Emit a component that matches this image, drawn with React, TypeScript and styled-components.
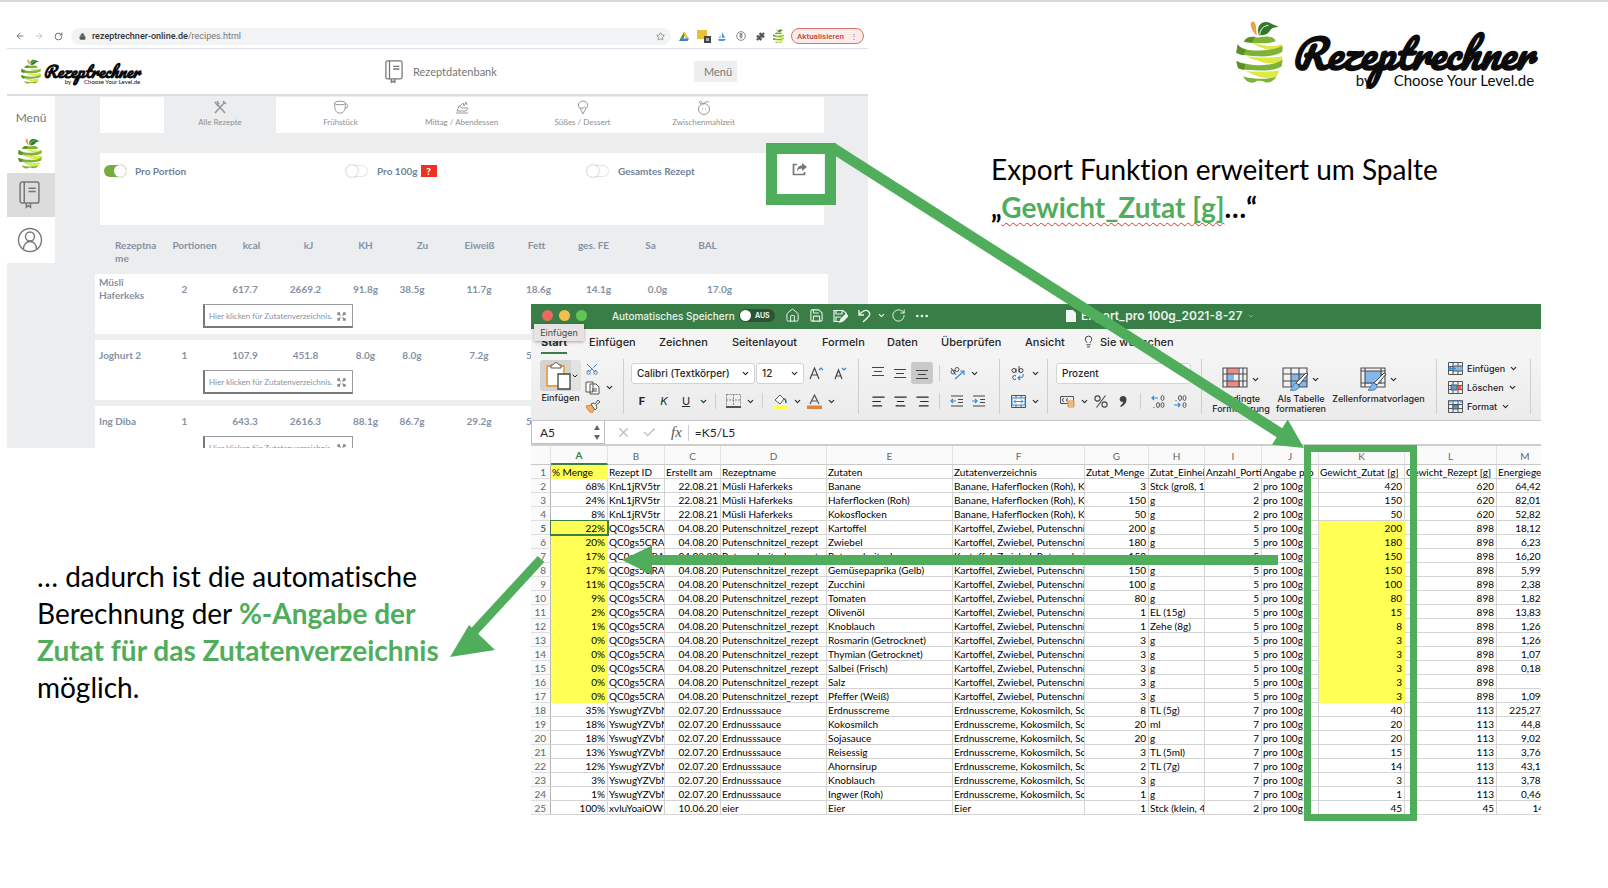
import React from 'react';
import styled, { createGlobalStyle, css } from 'styled-components';
import {
  AlignCenter,
  AlignLeft,
  AlignRight,
  ArrowLeft,
  ArrowRight,
  Check,
  ChevronDown,
  Home,
  Lightbulb,
  Lock,
  MoreHorizontal,
  Puzzle,
  RotateCw,
  Save,
  Scissors,
  Star,
  X,
} from 'lucide-react';

const GREEN = '#50ad5b';
const EXCEL = '#397d47';
const SHEET_FONT = 'Lato, "Noto Sans", sans-serif';
const UI_FONT = 'Inter, "Liberation Sans", sans-serif';

const GlobalStyle = createGlobalStyle`
  *, *::before, *::after { box-sizing: border-box; }
  body { margin: 0; background: #fff; font-family: ${SHEET_FONT}; }
  button, input, select { font: inherit; color: inherit; margin: 0; }
  button { border: 0; padding: 0; background: none; }
  p, h1 { margin: 0; }
`;

const Slide = styled.main`
  position: relative;
  min-height: 100vh;
  border-top: 2px solid #d9d9d9;
  overflow: hidden;
`;

/* ---------- objects placed on the slide ---------- */

const Placed = styled.div<{ $x: number; $y: number; $w?: number; $h?: number }>`
  position: absolute;
  left: ${p => p.$x}px;
  top: ${p => p.$y - 2}px;
  ${p => p.$w && `width: ${p.$w}px;`}
  ${p => p.$h && `height: ${p.$h}px;`}
`;

const Frame = styled(Placed)<{ $b: number }>`
  border: ${p => p.$b}px solid ${GREEN};
`;

const Note = styled.p<{ $lh: number }>`
  font-size: 28px;
  line-height: ${p => p.$lh}px;
  font-variant-ligatures: none;
  color: #000;
  white-space: nowrap;
  strong { color: ${GREEN}; }
  b { font-weight: 700; }
`;

const Misspelled = styled.strong`
  text-decoration: underline wavy #e0352b 1px;
  text-underline-offset: 4px;
  text-decoration-skip-ink: none;
`;

const Arrows = styled.svg`
  position: absolute;
  left: 0;
  top: -2px;
  pointer-events: none;
`;

/* ---------- logo ---------- */

const LogoBox = styled.div<{ $gap: number }>`
  display: flex;
  align-items: flex-start;
  gap: ${p => p.$gap}px;
`;
const Wordmark = styled.div<{ $size: number; $drop: number }>`
  font: italic 900 ${p => p.$size}px/1 Pacifico, Lato, sans-serif;
  padding-top: ${p => p.$drop}px;
  color: #0b0b0b;
  white-space: nowrap;
`;
const Byline = styled.div<{ $size: number }>`
  display: flex;
  justify-content: flex-end;
  gap: ${p => p.$size + 7}px;
  font: 400 ${p => p.$size}px/1 Lato, sans-serif;
`;

function Apple({ w, h }: { w: number; h: number }) {
  return (
    <svg width={w} height={h} viewBox="108 60 142 194" preserveAspectRatio="none" aria-hidden="true">
      <path d="M153 68C158 60 168 66 168 78L171 107C160 98 151 82 153 68Z" fill="#eda04a" />
      <path d="M177 106C168 80 185 62 205 67C215 70 225 77 236 80C225 84 217 82 211 92C204 104 192 108 177 106Z" fill="#327a2b" />
      <path d="M180 104C180 90 190 78 206 76" fill="none" stroke="#fff" strokeWidth="3" />
      <path d="M132 126C140 110 160 110 175 113C200 108 222 108 228 124C215 133 150 132 132 126Z" fill="#7db338" />
      <path d="M132 126C138 112 150 110 166 111L156 129Z" fill="#5c8f26" />
      <path d="M156 130C190 138 230 144 246 132L246 142C236 154 215 153 200 149C180 144 168 138 156 130Z" fill="#dfe845" />
      <path d="M113 134C125 150 160 155 190 152C215 150 235 146 249 138L248 156C230 168 200 172 170 170C140 168 115 166 109 158Z" fill="#7db338" />
      <path d="M113 134C118 142 125 147 138 150L130 166C118 164 111 162 109 158Z" fill="#5c8f26" />
      <path d="M140 170C165 174 215 176 248 170L247 184C235 194 205 193 188 188C168 182 152 178 140 170Z" fill="#dfe845" />
      <path d="M109 184C130 194 170 199 200 196C225 193 240 188 249 180L246 200C235 210 200 214 175 213C150 212 120 212 114 205Z" fill="#7db338" />
      <path d="M109 184C118 189 126 192 136 193L132 211C122 210 117 208 114 205Z" fill="#5c8f26" />
      <path d="M138 214C160 218 215 217 240 213L230 231C210 238 188 236 172 230C158 225 148 221 138 214Z" fill="#dfe845" />
      <path d="M129 230C150 240 200 242 230 231C222 245 208 252 196 249C185 243 172 243 165 249C152 254 136 246 129 230Z" fill="#7db338" />
    </svg>
  );
}

/* ---------- browser window ---------- */

const Browser = styled.section`
  display: flex;
  flex-direction: column;
  height: 424px;
  overflow: hidden;
  background: #ebedef;
  color: #8592a4;
`;
const Toolbar = styled.div`
  display: flex;
  align-items: center;
  height: 25px;
  flex: none;
  background: #fff;
  border-bottom: 1px solid #dbe1ea;
  padding: 0 4px 0 7px;
  gap: 7px;
  color: #666;
`;
const BarIcon = styled.button`
  display: grid;
  place-items: center;
  width: 12px;
`;
const Address = styled.label`
  flex: 1;
  display: flex;
  align-items: center;
  gap: 6px;
  height: 17px;
  padding: 0 6px 0 8px;
  border-radius: 9px;
  background: #f1f3f4;
  font: 9px Roboto, sans-serif;
  color: #777;
  b { font-weight: 500; color: #333; }
  span { flex: 1; }
`;
const Update = styled.button`
  display: flex;
  align-items: center;
  justify-content: center;
  gap: 6px;
  width: 73px;
  height: 16px;
  border: 1px solid #d97069;
  border-radius: 8px;
  background: #fbeceb;
  color: #c5443c;
  font: 500 8px Roboto, sans-serif;
`;
const SiteHeader = styled.header`
  display: grid;
  grid-template-columns: 364px 309px 43px;
  align-items: center;
  height: 47px;
  flex: none;
  padding-left: 14px;
  background: #fff;
  border-bottom: 2px solid #dcdddf;
  color: #777;
  font-size: 11px;
`;
const SiteTitle = styled.div`
  display: flex;
  align-items: center;
  gap: 10px;
`;
const MenuButton = styled.button`
  height: 21px;
  padding-left: 5px;
  background: #eee;
`;
const SiteBody = styled.div`
  display: flex;
  align-items: flex-start;
`;
const Side = styled.nav`
  display: grid;
  grid-template-rows: 42px 35px 44px 46px;
  place-items: center;
  width: 48px;
  flex: none;
  background: #fff;
  color: #777;
  font-size: 12px;
`;
const SideItem = styled.a<{ $active?: boolean }>`
  display: grid;
  place-items: center;
  width: 100%;
  height: 100%;
  padding-right: 3px;
  background: ${p => (p.$active ? '#dcdcdc' : 'transparent')};
  color: #777;
`;
const SideLogo = styled.a`
  align-self: start;
  padding-right: 3px;
  line-height: 0;
`;
const Content = styled.div`
  padding: 1px 0 0 40px;
`;
const Tabs = styled.nav`
  display: grid;
  grid-template-columns: 56px 112px repeat(4, 113px);
  gap: 8px;
  width: 724px;
  height: 36px;
  margin-left: 5px;
  background: #fff;
`;
const Tab = styled.a<{ $active?: boolean }>`
  display: flex;
  flex-direction: column;
  align-items: center;
  gap: 2px;
  padding-top: 3px;
  background: ${p => (p.$active ? '#ebedef' : 'transparent')};
  color: #8f8f8f;
  font-size: 8px;
  line-height: 10px;
  text-decoration: none;
`;
const Options = styled.div`
  display: grid;
  grid-template-columns: 242px 241px 204px 16px;
  align-items: center;
  align-content: start;
  width: 724px;
  height: 72px;
  margin: 20px 0 0 5px;
  padding: 10px 0 0 4px;
  background: #fff;
  font-size: 10px;
  font-weight: 700;
  color: #73819a;
`;
const Option = styled.label`
  display: flex;
  align-items: center;
  gap: 9px;
`;
const Toggle = styled.input`
  appearance: none;
  display: flex;
  width: 22px;
  height: 12px;
  border-radius: 6px;
  background: #fff;
  box-shadow: inset 0 0 0 1px #e6e6e6;
  &::before {
    content: '';
    width: 12px;
    height: 12px;
    border-radius: 6px;
    background: #fff;
    box-shadow: 0 0 2px #999;
  }
  &:checked {
    justify-content: flex-end;
    background: #76ac3c;
    box-shadow: none;
  }
`;
const Help = styled.span`
  width: 16px;
  height: 12px;
  margin-left: -6px;
  background: #ee3124;
  color: #fff;
  font-weight: 900;
  line-height: 12px;
  text-align: center;
`;
const RecipeTable = styled.table`
  display: block;
  width: 733px;
  font-size: 10px;
  font-weight: 700;
  thead, tbody { display: block; }
  th, td { padding: 0; text-align: center; font-weight: 700; }
`;
const HeadRow = styled.tr`
  display: grid;
  grid-template-columns: 71px repeat(10, 57px);
  height: 49px;
  padding-top: 14px;
  line-height: 13px;
  th:first-child {
    width: 45px;
    margin-left: 20px;
    text-align: left;
    word-break: break-all;
  }
`;
const RecipeRow = styled.tr`
  display: grid;
  grid-template-columns: 59px 61px 60px 61px 59px 34px 80px 59px 61px 57px 67px;
  grid-template-rows: 30px 30px;
  align-items: center;
  height: 60px;
  margin-bottom: 6px;
  background: #fff;
  line-height: 13px;
  td:first-child { text-align: left; padding-left: 4px; }
  td:nth-child(7) { padding-left: 20px; }
`;
const ListCell = styled.td`
  grid-column: 1 / -1;
  align-self: start;
  justify-self: start;
  && { padding: 0 0 0 108px; }
`;
const ListButton = styled.button`
  display: flex;
  align-items: center;
  gap: 4px;
  width: 150px;
  height: 24px;
  padding: 1px 0 0 4px;
  border: 1px solid #9a9ca0;
  border-left: 2px solid #77797c;
  border-bottom: 2px solid #77797c;
  font-size: 8px;
  font-weight: 400;
  white-space: nowrap;
`;

const RECIPES = [
  ['Müsli Haferkeks', '2', '617.7', '2669.2', '91.8g', '38.5g', '11.7g', '18.6g', '14.1g', '0.0g', '17.0g'],
  ['Joghurt 2', '1', '107.9', '451.8', '8.0g', '8.0g', '7.2g', '51.1g'],
  ['Ing Diba', '1', '643.3', '2616.3', '88.1g', '86.7g', '29.2g', '51.6g'],
];

const BookIcon = ({ s }: { s: number }) => (
  <svg width={s} height={s * 1.3} viewBox="0 0 20 26" fill="none" stroke="currentColor" strokeWidth="1.4">
    <rect x="1" y="1" width="18" height="20" rx="2" />
    <path d="M5 1v20M9 7h7M9 10h7M7 21v4l2-1.5 2 1.5v-4" />
  </svg>
);
const TabIcons = [
  <svg key="a" width="14" height="15" viewBox="0 0 14 15" fill="none" stroke="#999" strokeWidth="1.6"><path d="M2 13L11 3M12 13L4 4M2 2l3 4M4 1l2 3M10 1l3 3" /></svg>,
  <svg key="b" width="16" height="15" viewBox="0 0 16 15" fill="none" stroke="#999"><ellipse cx="7" cy="3" rx="5.5" ry="1.8" /><path d="M1.5 3c0 5 1 9 3.5 10h4c2.5-1 3.5-5 3.5-10M12.5 4c3-.5 3 4-.5 4.5" /></svg>,
  <svg key="c" width="14" height="15" viewBox="0 0 14 15" fill="none" stroke="#999"><path d="M1 13h12M2 11h9l2-3H7L4 6 2 11M5 6l3-3 1 3 2-4 1 3" /></svg>,
  <svg key="d" width="12" height="15" viewBox="0 0 12 15" fill="none" stroke="#999"><path d="M3 8L6 14 9 8M2 7.5C0 4 3 1 6 1s6 3 4 6.5c-1 1-2 0-2.5-.5C6 8.5 4 8.5 2 7.5" /></svg>,
  <svg key="e" width="14" height="15" viewBox="0 0 14 15" fill="none" stroke="#999"><circle cx="7" cy="9" r="5.5" /><path d="M7 4C5 1 3 1 2 2c1 2 3 2 5 2 0-2 3-3 5-2M5 9h1M8 9h1" /></svg>,
];
const TAB_NAMES = ['Alle Rezepte', 'Frühstück', 'Mittag / Abendessen', 'Süßes / Dessert', 'Zwischenmahlzeit'];

function BrowserWindow() {
  return (
    <Browser>
      <Toolbar>
        <BarIcon aria-label="Zurück"><ArrowLeft size={10} /></BarIcon>
        <BarIcon aria-label="Vor"><ArrowRight size={10} color="#bbb" /></BarIcon>
        <BarIcon aria-label="Neu laden"><RotateCw size={9} strokeWidth={2.5} /></BarIcon>
        <Address>
          <Lock size={7} fill="#555" strokeWidth={3} />
          <span><b>rezeptrechner-online.de</b>/recipes.html</span>
          <Star size={9} />
        </Address>
        <BarIcon aria-label="Drive"><svg width="10" height="9" viewBox="0 0 10 9"><path d="M5 0L0 9h3l3-6z" fill="#2a9d4f" /><path d="M4 0h2l4 7H7z" fill="#f6c231" /><path d="M2 9l1-2.5h7L8.5 9z" fill="#3b7ded" /></svg></BarIcon>
        <BarIcon aria-label="Notiz"><svg width="14" height="14" viewBox="0 0 14 14"><path d="M0 1h10v9H0z" fill="#ecc038" /><path d="M7 7h7v7H7z" fill="#444" /><path d="M9 9h3v3H9z" fill="#aaa" /></svg></BarIcon>
        <BarIcon aria-label="Segel"><svg width="8" height="9" viewBox="0 0 8 9"><path d="M2.5 6V3L1 6zM4 6V0l3 5.5z" fill="#4a9bd6" /><path d="M0 7h8L6 9H1z" fill="#4a9bd6" /></svg></BarIcon>
        <BarIcon aria-label="Info"><svg width="10" height="10" viewBox="0 0 10 10"><circle cx="5" cy="5" r="4.3" fill="none" stroke="#888" /><path d="M3.5 2h3v4l-1.5 2-1.5-2z" fill="#999" /></svg></BarIcon>
        <BarIcon aria-label="Erweiterungen"><Puzzle size={9} fill="#555" /></BarIcon>
        <Apple w={11} h={14} />
        <Update>Aktualisieren <span>⋮</span></Update>
      </Toolbar>
      <SiteHeader>
        <LogoBox $gap={2}>
          <Apple w={20} h={25} />
          <Wordmark $size={16} $drop={4}>
            Rezeptrechner
            <Byline $size={6}><span>by</span><span>Choose Your Level.de</span></Byline>
          </Wordmark>
        </LogoBox>
        <SiteTitle><BookIcon s={18} />Rezeptdatenbank</SiteTitle>
        <MenuButton>Menü</MenuButton>
      </SiteHeader>
      <SiteBody>
        <Side>
          <span>Menü</span>
          <SideLogo href="#start" aria-label="Start"><Apple w={24} h={31} /></SideLogo>
          <SideItem href="#rezepte" $active aria-label="Rezepte"><BookIcon s={21} /></SideItem>
          <SideItem href="#konto" aria-label="Konto">
            <svg width="26" height="26" viewBox="0 0 26 26" fill="none" stroke="currentColor" strokeWidth="1.4"><circle cx="13" cy="13" r="11.5" /><circle cx="13" cy="9.5" r="4.5" /><path d="M6.5 22c0-10 13-10 13 0" /></svg>
          </SideItem>
        </Side>
        <Content>
          <Tabs>
            <span />
            {TAB_NAMES.map((t, i) => (
              <Tab key={t} href="#tab" $active={i === 0}>{TabIcons[i]}{t}</Tab>
            ))}
          </Tabs>
          <Options>
            <Option><Toggle type="checkbox" defaultChecked />Pro Portion</Option>
            <Option><Toggle type="checkbox" />Pro 100g<Help>?</Help></Option>
            <Option><Toggle type="checkbox" />Gesamtes Rezept</Option>
            <button aria-label="Exportieren">
              <svg width="15" height="13" viewBox="0 0 15 13"><path d="M5 1.5H1.5v10h11V9" fill="none" stroke="#777" strokeWidth="1.7" /><path d="M10 0l5 4-5 4V5.5C7 5.5 6 6.5 5 8.5 5 4.5 7 2.5 10 2.5z" fill="#777" /></svg>
            </button>
          </Options>
          <RecipeTable>
            <thead>
              <HeadRow>
                {['Rezeptname', 'Portionen', 'kcal', 'kJ', 'KH', 'Zu', 'Eiweiß', 'Fett', 'ges. FE', 'Sa', 'BAL'].map(h => <th key={h}>{h}</th>)}
              </HeadRow>
            </thead>
            <tbody>
              {RECIPES.map(r => (
                <RecipeRow key={r[0]}>
                  {r.map((c, i) => <td key={i}>{c}</td>)}
                  <ListCell>
                    <ListButton>
                      Hier klicken für Zutatenverzeichnis.
                      <svg width="9" height="9" viewBox="0 0 9 9" fill="none" stroke="#888" strokeWidth="1.3"><path d="M1 3V1h2M6 1h2v2M8 6v2H6M3 8H1V6M1 1l2.5 2.5M8 1L5.5 3.5M1 8l2.5-2.5M8 8L5.5 5.5" /></svg>
                    </ListButton>
                  </ListCell>
                </RecipeRow>
              ))}
            </tbody>
          </RecipeTable>
        </Content>
      </SiteBody>
    </Browser>
  );
}

/* ---------- spreadsheet window ---------- */

const Excel = styled.section`
  position: relative;
  height: 513px;
  overflow: hidden;
  background: #fff;
  font: 11px ${UI_FONT};
  color: #262626;
`;
const TitleBar = styled.div`
  display: flex;
  align-items: center;
  height: 25px;
  padding: 0 0 2px 11px;
  background: ${EXCEL};
  color: #e9f3eb;
`;
const Light = styled.span<{ $c: string }>`
  width: 11px;
  height: 11px;
  margin-right: 6px;
  border-radius: 50%;
  background: ${p => p.$c};
`;
const AutoSave = styled.label`
  display: flex;
  align-items: center;
  justify-content: space-between;
  width: 163px;
  margin: 0 5px 0 19px;
  font-size: 10px;
  font-weight: 500;
  white-space: nowrap;
`;
const Switch = styled.button`
  display: flex;
  align-items: center;
  gap: 4px;
  width: 36px;
  height: 13px;
  flex: none;
  border-radius: 7px;
  background: #2a5434;
  color: #fff;
  font-size: 7px;
  font-weight: 600;
  &::before {
    content: '';
    width: 11px;
    height: 11px;
    margin-left: 1px;
    border-radius: 50%;
    background: #fff;
  }
`;
const Tool = styled.button<{ $w?: number; $on?: boolean }>`
  display: grid;
  place-items: center;
  width: ${p => p.$w ?? 22}px;
  height: 22px;
  flex: none;
  border-radius: 3px;
  ${p => p.$on && css`background: #c9c9c9;`}
`;
const DocTitle = styled.h1`
  display: flex;
  align-items: center;
  gap: 5px;
  margin-left: 132px;
  font-size: 12px;
  font-weight: 600;
  white-space: nowrap;
`;
const RibbonTabs = styled.nav`
  display: grid;
  grid-template-columns: 48px 70px 73px 90px 65px 54px 84px 57px 18px auto;
  align-items: center;
  height: 28px;
  padding: 0 0 3px 10px;
  background: #f4f4f4;
`;
const RibbonTab = styled.a<{ $active?: boolean }>`
  justify-self: start;
  height: 25px;
  line-height: 26px;
  font-size: 11px;
  font-weight: ${p => (p.$active ? 700 : 500)};
  color: inherit;
  text-decoration: none;
  white-space: nowrap;
  border-bottom: 2px solid ${p => (p.$active ? EXCEL : 'transparent')};
`;
const Tooltip = styled.div`
  position: absolute;
  left: 3px;
  top: 20px;
  width: 50px;
  height: 17px;
  background: #e6e3e2;
  box-shadow: 0 1px 3px #0005;
  color: #4c4c4c;
  font-size: 9px;
  line-height: 17px;
  text-align: center;
`;
const Ribbon = styled.div`
  display: flex;
  height: 64px;
  padding: 2px 0 6px;
  background: linear-gradient(#f4f4f4, #ebebeb);
  border-bottom: 1px solid #c6c6c6;
`;
const Group = styled.div<{ $w: number; $pad?: number }>`
  display: flex;
  flex-direction: column;
  flex: none;
  gap: 6px;
  width: ${p => p.$w}px;
  padding: 3px 0 0 ${p => p.$pad ?? 7}px;
  border-right: 1px solid #cfcfcf;
`;
const Line = styled.div`
  display: flex;
  align-items: center;
  height: 22px;
`;
const Sep = styled.span`
  width: 1px;
  height: 16px;
  margin: 0 6px;
  background: #cfcfcf;
`;
const SelectBox = styled.span<{ $w: number }>`
  display: flex;
  align-items: center;
  width: ${p => p.$w}px;
  height: 21px;
  flex: none;
  padding-right: 4px;
  border: 1px solid #d3d3d3;
  border-radius: 3px;
  background: #fff;
  & + & { margin-left: 1px; }
  select {
    appearance: none;
    flex: 1;
    min-width: 0;
    border: 0;
    padding: 0 0 0 5px;
    background: none;
    font-weight: 500;
    font-size: 10px;
  }
`;
const PasteGroup = styled.div`
  display: flex;
  width: 93px;
  flex: none;
  padding-left: 9px;
  border-right: 1px solid #cfcfcf;
`;
const Column = styled.div<{ $tight?: boolean }>`
  display: flex;
  flex-direction: column;
  ${p => p.$tight && css`${Line} { height: 19px; }`}
`;
const PasteButton = styled.button`
  display: flex;
  align-items: center;
  width: 41px;
  height: 31px;
  margin: 1px 0 2px;
  background: linear-gradient(90deg, #d3d3d3 31px, #e2e2e2 31px);
  border-radius: 3px;
`;
const Caption = styled.span`
  font-size: 9px;
  font-weight: 500;
  line-height: 10px;
  text-align: center;
  white-space: nowrap;
`;
const BigTools = styled.div`
  display: flex;
  width: 235px;
  flex: none;
  padding-left: 7px;
  border-right: 1px solid #cfcfcf;
`;
const BigTool = styled.button<{ $w: number }>`
  display: flex;
  flex-direction: column;
  align-items: center;
  width: ${p => p.$w}px;
  padding-top: 5px;
`;
const BigIcon = styled.span`
  display: flex;
  align-items: center;
  gap: 2px;
  height: 30px;
`;
const CellTools = styled.div`
  display: grid;
  grid-template-rows: repeat(3, 19px);
  align-items: center;
  width: 94px;
  flex: none;
  padding: 0 0 0 11px;
  border-right: 1px solid #cfcfcf;
`;
const CellTool = styled.button`
  display: flex;
  align-items: center;
  gap: 4px;
  font-size: 9px;
  font-weight: 500;
`;
const FormulaBar = styled.div`
  display: flex;
  align-items: center;
  height: 25px;
  border-bottom: 2px solid #cdcdcd;
  font: 12px ${SHEET_FONT};
`;
const NameBox = styled.label`
  display: flex;
  align-items: center;
  width: 74px;
  height: 23px;
  margin-right: 5px;
  padding: 0 4px 0 8px;
  border: 1px solid #c0c0c0;
  border-top: 0;
  input { flex: 1; min-width: 0; border: 0; padding: 0; }
`;
const Formula = styled.input`
  flex: 1;
  height: 16px;
  margin-left: 6px;
  padding: 0 0 0 6px;
  border: 0;
  border-left: 1px solid #d0d0d0;
`;
const Fx = styled.span`
  margin-left: 9px;
  font: italic 15px "Liberation Serif", serif;
  color: #555;
`;
const Sheet = styled.table`
  width: 1023px;
  table-layout: fixed;
  border-collapse: separate;
  border-spacing: 0;
  font: 10px/12px ${SHEET_FONT};
  color: #000;
`;
const ColHead = styled.th<{ $on?: boolean }>`
  height: 19px;
  padding: 1px 0 0;
  background: #fafafa;
  border-right: 1px solid #e2e2e2;
  border-bottom: ${p => (p.$on ? `2px solid ${EXCEL}` : '1px solid #c8c8c8')};
  color: ${p => (p.$on ? EXCEL : '#666')};
  font-weight: ${p => (p.$on ? 700 : 400)};
`;
const RowHead = styled.th<{ $on?: boolean }>`
  height: 14px;
  padding: 1px 4px 0 0;
  background: #fafafa;
  border-right: 1px solid #b5b5b5;
  border-bottom: 1px solid #dedede;
  color: ${p => (p.$on ? EXCEL : '#666')};
  font-weight: ${p => (p.$on ? 700 : 400)};
  text-align: right;
`;
const Cell = styled.td<{ $num?: boolean; $hot?: boolean; $active?: boolean }>`
  height: 14px;
  padding: 1px 2px 0 1px;
  overflow: hidden;
  white-space: nowrap;
  text-align: ${p => (p.$num ? 'right' : 'left')};
  background: ${p => (p.$hot ? '#ffff54' : '#fff')};
  border-right: 1px solid ${p => (p.$hot ? '#ffff54' : '#d4d4d4')};
  border-bottom: 1px solid ${p => (p.$hot ? '#ffff54' : '#d4d4d4')};
  ${p => p.$active && css`
    position: relative;
    border-color: ${EXCEL};
    box-shadow: 0 0 0 1px ${EXCEL};
  `}
`;
/* Energy values are wider than the visible part of their column. */
const Wide = styled.span`
  display: block;
  width: 60px;
  text-align: right;
`;

const COLS = [57, 57, 56, 106, 126, 132, 64, 56, 57, 57, 86, 92, 57];
const LETTERS = 'ABCDEFGHIJKLM'.split('');
const NUMERIC = [0, 2, 6, 8, 10, 11, 12];
const HEAD = ['% Menge', 'Rezept ID', 'Erstellt am', 'Rezeptname', 'Zutaten', 'Zutatenverzeichnis', 'Zutat_Menge', 'Zutat_Einheit', 'Anzahl_Portionen', 'Angabe pro', 'Gewicht_Zutat [g]', 'Gewicht_Rezept [g]', 'Energiegehalt'];

const batch = (id: string, date: string, name: string, list: string, portions: string, total: string, rows: string[][]) =>
  rows.map(([pct, item, qty, unit, weight, energy]) => [pct, id, date, name, item, list, qty, unit, portions, 'pro 100g', weight, total, energy]);

const DATA: string[][] = [
  HEAD,
  ...batch('KnL1jRV5tr', '22.08.21', 'Müsli Haferkeks', 'Banane, Haferflocken (Roh), Kokosflocken', '2', '620', [
    ['68%', 'Banane', '3', 'Stck (groß, 140g)', '420', '64,42258'],
    ['24%', 'Haferflocken (Roh)', '150', 'g', '150', '82,01612'],
    ['8%', 'Kokosflocken', '50', 'g', '50', '52,82258'],
  ]),
  ...batch('QC0gs5CRA7', '04.08.20', 'Putenschnitzel_rezept', 'Kartoffel, Zwiebel, Putenschnitzel', '5', '898', [
    ['22%', 'Kartoffel', '200', 'g', '200', '18,12917'],
    ['20%', 'Zwiebel', '180', 'g', '180', '6,23719'],
    ['17%', 'Putenschnitzel', '150', 'g', '150', '16,20267'],
    ['17%', 'Gemüsepaprika (Gelb)', '150', 'g', '150', '5,99220'],
    ['11%', 'Zucchini', '100', 'g', '100', '2,38307'],
    ['9%', 'Tomaten', '80', 'g', '80', '1,82628'],
    ['2%', 'Olivenöl', '1', 'EL (15g)', '15', '13,83073'],
    ['1%', 'Knoblauch', '1', 'Zehe (8g)', '8', '1,26948'],
    ['0%', 'Rosmarin (Getrocknet)', '3', 'g', '3', '1,26057'],
    ['0%', 'Thymian (Getrocknet)', '3', 'g', '3', '1,07349'],
    ['0%', 'Salbei (Frisch)', '3', 'g', '3', '0,18040'],
    ['0%', 'Salz', '3', 'g', '3', ''],
    ['0%', 'Pfeffer (Weiß)', '3', 'g', '3', '1,09020'],
  ]),
  ...batch('YswugYZVbNq', '02.07.20', 'Erdnusssauce', 'Erdnusscreme, Kokosmilch, Sojasauce', '7', '113', [
    ['35%', 'Erdnusscreme', '8', 'TL (5g)', '40', '225,27433'],
    ['18%', 'Kokosmilch', '20', 'ml', '20', '44,8849'],
    ['18%', 'Sojasauce', '20', 'g', '20', '9,02654'],
    ['13%', 'Reisessig', '3', 'TL (5ml)', '15', '3,76991'],
    ['12%', 'Ahornsirup', '2', 'TL (7g)', '14', '43,1150'],
    ['3%', 'Knoblauch', '3', 'g', '3', '3,78230'],
    ['1%', 'Ingwer (Roh)', '1', 'g', '1', '0,46017'],
  ]),
  ['100%', 'xvluYoaiOW', '10.06.20', 'eier', 'Eier', 'Eier', '1', 'Stck (klein, 45g)', '2', 'pro 100g', '45', '45', '14,22'],
];

const Chev = ({ w = 12 }: { w?: number }) => (
  <Tool $w={w} aria-label="Mehr"><ChevronDown size={9} strokeWidth={3} /></Tool>
);
const Rows = ({ a }: { a: string }) => (
  <svg width="14" height="14" viewBox="0 0 14 14" stroke="#444" strokeWidth="1.2"><path d={a} /></svg>
);
const GridPic = ({ kind }: { kind: 'cond' | 'table' | 'style' }) => (
  <svg width="27" height="25" viewBox="0 0 27 25">
    {kind === 'cond' && <><path d="M5 1h11v6H5zM5 14h13v6H5z" fill="#ee8a85" /><path d="M5 7h7v7H5z" fill="#84b7ea" /></>}
    {kind === 'table' && <path d="M9 7h16v13H9z" fill="#84b7ea" />}
    {kind === 'style' && <path d="M5 4h17v13H5z" fill="#84b7ea" />}
    <path
      d={kind === 'style' ? 'M1 1h24v19H1zM5 1v19M1 4h24M1 16h24M21 1v8' : kind === 'cond' ? 'M1 1h24v19H1zM1 7h24M1 14h24M5 1v19M17 1v19M21 1v19' : 'M1 1h24v19H1zM1 7h24M1 14h24M9 1v19M17 1v19'}
      fill="none" stroke="#4a4a4a" strokeWidth="1.1"
    />
    {kind !== 'cond' && <><path d="M26 7l-9 11-3-2L24 6z" fill="#f6f6f6" stroke="#444" /><path d="M14 16l3 3c0 4-5 5-9 4 3-1 2-6 6-7z" fill="#84b7ea" stroke="#3a7cc0" /></>}
  </svg>
);
const MiniGrid = ({ mark }: { mark: React.ReactNode }) => (
  <svg width="15" height="13" viewBox="0 0 15 13" fill="none" stroke="#555"><path d="M.5 .5h14v12H.5zM.5 4.5h14M.5 8.5h14M5 0v12M10 0v12" />{mark}</svg>
);

function ExcelWindow() {
  return (
    <Excel>
      <TitleBar>
        <Light $c="#ec6a5e" /><Light $c="#f4bf4f" /><Light $c="#61c554" />
        <AutoSave>Automatisches Speichern<Switch>AUS</Switch></AutoSave>
        <Tool $w={24} aria-label="Start"><Home size={15} strokeWidth={1.6} /></Tool>
        <Tool $w={24} aria-label="Speichern"><Save size={15} strokeWidth={1.7} /></Tool>
        <Tool $w={24} aria-label="Speichern unter">
          <svg width="15" height="14" viewBox="0 0 15 14" fill="none" stroke="currentColor" strokeWidth="1.2"><path d="M7 12.5H1v-11h9l3 2.5v2M3 1.5V5h6V1.5M3 12V8h5" /><path d="M7 13l1-3 5-5 2 2-5 5z" fill="currentColor" /></svg>
        </Tool>
        <Tool $w={24} aria-label="Rückgängig">
          <svg width="13" height="14" viewBox="0 0 13 14" fill="none" stroke="currentColor" strokeWidth="1.4"><path d="M1 1v5h5M1 6C4 2 8 0 10.5 2.5S12 7 5 13" /></svg>
        </Tool>
        <Chev w={10} />
        <Tool $w={24} aria-label="Wiederholen"><RotateCw size={15} strokeWidth={1.6} /></Tool>
        <Tool $w={24} aria-label="Weitere"><MoreHorizontal size={16} /></Tool>
        <DocTitle>
          <svg width="10" height="12" viewBox="0 0 10 12"><path d="M0 0h7l3 3v9H0z" fill="#f1f6f2" /></svg>
          Export_pro 100g_2021-8-27
          <ChevronDown size={8} opacity={0.6} />
        </DocTitle>
      </TitleBar>
      <RibbonTabs>
        {['Start', 'Einfügen', 'Zeichnen', 'Seitenlayout', 'Formeln', 'Daten', 'Überprüfen', 'Ansicht'].map((t, i) => (
          <RibbonTab key={t} href="#ribbon" $active={i === 0}>{t}</RibbonTab>
        ))}
        <Lightbulb size={13} strokeWidth={1.6} />
        <RibbonTab href="#ribbon">Sie wünschen</RibbonTab>
      </RibbonTabs>
      <Tooltip role="tooltip">Einfügen</Tooltip>
      <Ribbon>
        <PasteGroup>
          <Column>
            <PasteButton aria-label="Einfügen aus Zwischenablage">
              <svg width="31" height="30" viewBox="0 0 31 30"><path d="M7 5h17v20H7z" fill="#fff" stroke="#e8a04c" strokeWidth="1.8" /><path d="M11 7V4h2c1-3 5-3 6 0h2v3z" fill="#fff" stroke="#555" /><path d="M18 13h12v15H18z" fill="#fff" stroke="#444" strokeWidth="1.3" /></svg>
              <ChevronDown size={8} strokeWidth={3} />
            </PasteButton>
            <Caption>Einfügen</Caption>
          </Column>
          <Column $tight>
            <Line><Tool aria-label="Ausschneiden"><Scissors size={14} strokeWidth={1.6} color="#3c78b4" transform="rotate(-90)" /></Tool></Line>
            <Line>
              <Tool aria-label="Kopieren"><svg width="15" height="14" viewBox="0 0 15 14" fill="#fff" stroke="#555"><path d="M1 1h7v10H1zM5 3h6l3 3v7H5zM7 8h5M7 10h5" /></svg></Tool>
              <Chev />
            </Line>
            <Line><Tool aria-label="Format übertragen"><svg width="15" height="13" viewBox="0 0 15 13"><path d="M1 6l6-1 3 3-3 5C4 12 2 9 1 6z" fill="#f3ae62" stroke="#d98532" /><path d="M6 4l2-1 2 1 3-4 2 2-4 3 1 3-2 2z" fill="#fff" stroke="#555" /></svg></Tool></Line>
          </Column>
        </PasteGroup>
        <Group $w={235}>
          <Line>
            <SelectBox $w={124}><select aria-label="Schriftart"><option>Calibri (Textkörper)</option></select><ChevronDown size={9} strokeWidth={3} /></SelectBox>
            <SelectBox $w={48}><select aria-label="Schriftgröße"><option>12</option></select><ChevronDown size={9} strokeWidth={3} /></SelectBox>
            <Tool $w={24} aria-label="Schrift vergrößern"><svg width="15" height="14" viewBox="0 0 15 14" fill="none" stroke="#444" strokeWidth="1.2"><path d="M1 13L5.5 2 10 13M2.5 9h6" /><path d="M10 4l2-2 2 2" stroke="#3a8ad0" /></svg></Tool>
            <Tool $w={24} aria-label="Schrift verkleinern"><svg width="13" height="14" viewBox="0 0 13 14" fill="none" stroke="#444" strokeWidth="1.2"><path d="M1 13L4.5 4 8 13M2.3 10h4.5" /><path d="M8 2l2 2 2-2" stroke="#3a8ad0" /></svg></Tool>
          </Line>
          <Line>
            <Tool><b>F</b></Tool><Tool><i>K</i></Tool><Tool><u>U</u></Tool><Chev /><Sep />
            <Tool aria-label="Rahmen"><svg width="15" height="14" viewBox="0 0 15 14" fill="none" stroke="#888"><path d="M.5 .5h14v11M.5 .5v11M7.5 0v12M0 6h15" strokeDasharray="2 1" /><path d="M0 13h15" stroke="#222" strokeWidth="1.5" /></svg></Tool>
            <Chev /><Sep />
            <Tool aria-label="Füllfarbe"><svg width="15" height="15" viewBox="0 0 15 15"><path d="M2 6l5-5 4 4-4 5z" fill="#fff" stroke="#555" /><path d="M11 5c2 0 2 2 2 4" stroke="#2b6cb0" strokeWidth="1.6" fill="none" /><path d="M0 11.5h15V15H0z" fill="#ffff54" /></svg></Tool>
            <Chev />
            <Tool aria-label="Schriftfarbe"><svg width="15" height="15" viewBox="0 0 15 15"><path d="M3 10L7.5 1 12 10M4.5 7h6" fill="none" stroke="#555" strokeWidth="1.2" /><path d="M0 11.5h15V15H0z" fill="#df8344" /></svg></Tool>
            <Chev />
          </Line>
        </Group>
        <Group $w={141} $pad={8}>
          <Line>
            <Tool aria-label="Oben"><Rows a="M1 1.5h12M3 5.5h8M1 9.5h12" /></Tool>
            <Tool aria-label="Mitte"><Rows a="M1 3.5h12M3 7.5h8M1 11.5h12" /></Tool>
            <Tool $on aria-label="Unten"><Rows a="M1 4.5h12M3 8.5h8M1 12.5h12" /></Tool>
            <Sep />
            <Tool aria-label="Ausrichtung"><svg width="15" height="14" viewBox="0 0 15 14" fill="none" stroke="#555"><circle cx="3" cy="6" r="2" /><circle cx="7" cy="3.5" r="2" /><path d="M1 2l5 7" /><path d="M5 13l9-8M10 5h4v4" stroke="#3a8ad0" strokeWidth="1.2" /></svg></Tool>
            <Chev />
          </Line>
          <Line>
            <Tool aria-label="Links"><AlignLeft size={15} strokeWidth={1.9} /></Tool>
            <Tool aria-label="Zentriert"><AlignCenter size={15} strokeWidth={1.9} /></Tool>
            <Tool aria-label="Rechts"><AlignRight size={15} strokeWidth={1.9} /></Tool>
            <Sep />
            <Tool aria-label="Einzug verkleinern"><svg width="14" height="12" viewBox="0 0 14 12" fill="none" stroke="#444" strokeWidth="1.2"><path d="M1 1h12M8 4.5h5M8 7.5h5M1 11h12" /><path d="M6 6H1M3 4L1 6l2 2" stroke="#3a8ad0" /></svg></Tool>
            <Tool aria-label="Einzug vergrößern"><svg width="14" height="12" viewBox="0 0 14 12" fill="none" stroke="#444" strokeWidth="1.2"><path d="M1 1h12M8 4.5h5M8 7.5h5M1 11h12" /><path d="M0 6h5M3 4l2 2-2 2" stroke="#3a8ad0" /></svg></Tool>
          </Line>
        </Group>
        <Group $w={48}>
          <Line>
            <Tool aria-label="Zeilenumbruch"><svg width="14" height="15" viewBox="0 0 14 15" fill="none" stroke="#444"><circle cx="3" cy="4.5" r="2" /><path d="M5 2.5v4M8 0v6.5" /><circle cx="10" cy="4.5" r="2" /><path d="M5 10a2 2 0 1 0 0 3" /><path d="M12 8c1 3-1 4-5 4M9 10l-2 2 2 2" stroke="#3a8ad0" strokeWidth="1.2" /></svg></Tool>
            <Chev />
          </Line>
          <Line>
            <Tool aria-label="Verbinden"><svg width="15" height="13" viewBox="0 0 15 13" fill="none" stroke="#555"><path d="M.5 .5h14v12H.5zM5 0v3M10 0v3M5 10v3M10 10v3" /><path d="M1 3h13v7H1z" fill="#fff" stroke="#3a8ad0" /><path d="M3 6.5h9M5 4.5l-2 2 2 2M10 4.5l2 2-2 2" stroke="#3a8ad0" /></svg></Tool>
            <Chev />
          </Line>
        </Group>
        <Group $w={154} $pad={8}>
          <Line><SelectBox $w={135}><select aria-label="Zahlenformat"><option>Prozent</option></select><ChevronDown size={9} strokeWidth={3} /></SelectBox></Line>
          <Line>
            <Tool aria-label="Währung"><svg width="15" height="13" viewBox="0 0 15 13" fill="none" stroke="#555"><path d="M.5 1.5h13v7H.5zM4 3.5a1.5 1.5 0 1 0 0 3M8 3.5a1.5 1.5 0 1 0 0 3" /><path d="M8 6h6v6H8zM8 8h6M8 10h6" fill="#fbe3c9" stroke="#e08f3c" /></svg></Tool>
            <Chev />
            <Tool aria-label="Prozentformat"><svg width="14" height="13" viewBox="0 0 14 13" fill="none" stroke="#444" strokeWidth="1.1"><circle cx="3.5" cy="3.5" r="2.6" /><circle cx="10.5" cy="9.5" r="2.6" /><path d="M11.5 .5l-9 12" /></svg></Tool>
            <Tool aria-label="Dezimaltrennzeichen"><svg width="8" height="11" viewBox="0 0 8 11"><path d="M4 0c5 0 5 8-2 11l-1-1c2-1 3-3 3-4C-1 6 0 0 4 0z" fill="#444" /></svg></Tool>
            <Sep />
            <Tool aria-label="Dezimalstelle hinzufügen"><svg width="14" height="13" viewBox="0 0 14 13" fill="none" stroke="#555"><ellipse cx="11.5" cy="3" rx="1.5" ry="2.5" /><ellipse cx="7" cy="10" rx="1.5" ry="2.5" /><ellipse cx="11.5" cy="10" rx="1.5" ry="2.5" /><path d="M3 12v1" /><path d="M7 3H1M3 1L1 3l2 2" stroke="#3a8ad0" strokeWidth="1.2" /></svg></Tool>
            <Tool aria-label="Dezimalstelle entfernen"><svg width="14" height="13" viewBox="0 0 14 13" fill="none" stroke="#555"><ellipse cx="7" cy="3" rx="1.5" ry="2.5" /><ellipse cx="11.5" cy="3" rx="1.5" ry="2.5" /><ellipse cx="11.5" cy="10" rx="1.5" ry="2.5" /><path d="M3 5v1" /><path d="M1 10h6M5 8l2 2-2 2" stroke="#3a8ad0" strokeWidth="1.2" /></svg></Tool>
          </Line>
        </Group>
        <BigTools>
          <BigTool $w={64}><BigIcon><GridPic kind="cond" /><ChevronDown size={9} strokeWidth={3} /></BigIcon><Caption>Bedingte<br />Formatierung</Caption></BigTool>
          <BigTool $w={56}><BigIcon><GridPic kind="table" /><ChevronDown size={9} strokeWidth={3} /></BigIcon><Caption>Als Tabelle<br />formatieren</Caption></BigTool>
          <BigTool $w={99}><BigIcon><GridPic kind="style" /><ChevronDown size={9} strokeWidth={3} /></BigIcon><Caption>Zellenformatvorlagen</Caption></BigTool>
        </BigTools>
        <CellTools>
          <CellTool><MiniGrid mark={<><path d="M5 4h10v5H5z" fill="#84b7ea" /><path d="M8 6.5H1M3 4.5l-2 2 2 2" stroke="#3a8ad0" strokeWidth="1.3" /></>} />Einfügen <ChevronDown size={9} strokeWidth={3} /></CellTool>
          <CellTool><MiniGrid mark={<><path d="M3 4h6v5H3z" fill="#5a9be0" /><path d="M9 4l5 5M14 4L9 9" stroke="#e04a3f" strokeWidth="1.4" /></>} />Löschen <ChevronDown size={9} strokeWidth={3} /></CellTool>
          <CellTool><MiniGrid mark={<><path d="M5 5h5v4H5z" fill="#5a9be0" /><path d="M2 1h11M2 0v3M13 0v3" stroke="#3a8ad0" /></>} />Format <ChevronDown size={9} strokeWidth={3} /></CellTool>
        </CellTools>
      </Ribbon>
      <FormulaBar>
        <NameBox>
          <input aria-label="Namenfeld" defaultValue="A5" />
          <svg width="6" height="15" viewBox="0 0 6 15" fill="#666"><path d="M0 5l3-5 3 5zM0 10l3 5 3-5z" /></svg>
        </NameBox>
        <Tool $w={26} aria-label="Abbrechen"><X size={15} color="#bbb" /></Tool>
        <Tool $w={26} aria-label="Bestätigen"><Check size={15} color="#bbb" /></Tool>
        <Fx>fx</Fx>
        <Formula aria-label="Formel" defaultValue="=K5/L5" />
      </FormulaBar>
      <Sheet>
        <colgroup>
          <col style={{ width: 20 }} />
          {COLS.map((w, i) => <col key={i} style={{ width: w }} />)}
        </colgroup>
        <thead>
          <tr>
            <ColHead as="td" aria-hidden="true" />
            {LETTERS.map((l, i) => <ColHead key={l} $on={i === 0}>{l}</ColHead>)}
          </tr>
        </thead>
        <tbody>
          {DATA.map((row, r) => (
            <tr key={r}>
              <RowHead $on={r === 4}>{r + 1}</RowHead>
              {row.map((v, c) => {
                const hot = (c === 0 && (r === 0 || (r > 3 && r < 17))) || (c === 10 && r > 3 && r < 17);
                return (
                  <Cell key={c} $num={r > 0 && NUMERIC.includes(c)} $hot={hot} $active={r === 4 && c === 0}>
                    {c === 12 && r > 0 ? <Wide>{v}</Wide> : v}
                  </Cell>
                );
              })}
            </tr>
          ))}
        </tbody>
      </Sheet>
    </Excel>
  );
}

export default function App() {
  return (
    <Slide>
      <GlobalStyle />
      <Placed $x={7} $y={24} $w={861}><BrowserWindow /></Placed>
      <Placed $x={531} $y={304} $w={1010}><ExcelWindow /></Placed>
      <Placed $x={1236} $y={20}>
        <LogoBox $gap={8}>
          <Apple w={47} h={64} />
          <Wordmark $size={40} $drop={13}>
            Rezeptrechner
            <Byline $size={15}><span>by</span><span>Choose Your Level.de</span></Byline>
          </Wordmark>
        </LogoBox>
      </Placed>
      <Placed $x={991} $y={150}>
        <Note $lh={38}>
          Export Funktion erweitert um Spalte<br />
          <b>„</b><Misspelled>Gewicht_Zutat [g]</Misspelled><b>…“</b>
        </Note>
      </Placed>
      <Placed $x={37} $y={558}>
        <Note $lh={37}>
          … dadurch ist die automatische<br />
          Berechnung der <strong>%-Angabe der</strong><br />
          <strong>Zutat für das Zutatenverzeichnis</strong><br />
          möglich.
        </Note>
      </Placed>
      <Frame $x={766} $y={143} $w={70} $h={62} $b={11} />
      <Frame $x={1304} $y={445} $w={113} $h={376} $b={7} />
      <Arrows width="1608" height="888" viewBox="0 0 1608 888" fill={GREEN} stroke={GREEN} aria-hidden="true">
        <path d="M832 147.5L1283 435" strokeWidth="10.5" />
        <path d="M1304 448L1287.7 419.5L1272 444.7Z" stroke="none" />
        <path d="M1278 560H650" strokeWidth="10" />
        <path d="M622 560L652 545.5V575Z" stroke="none" />
        <path d="M541 559L470 636" strokeWidth="9" />
        <path d="M450 657L469 625L495 650Z" stroke="none" />
      </Arrows>
    </Slide>
  );
}
